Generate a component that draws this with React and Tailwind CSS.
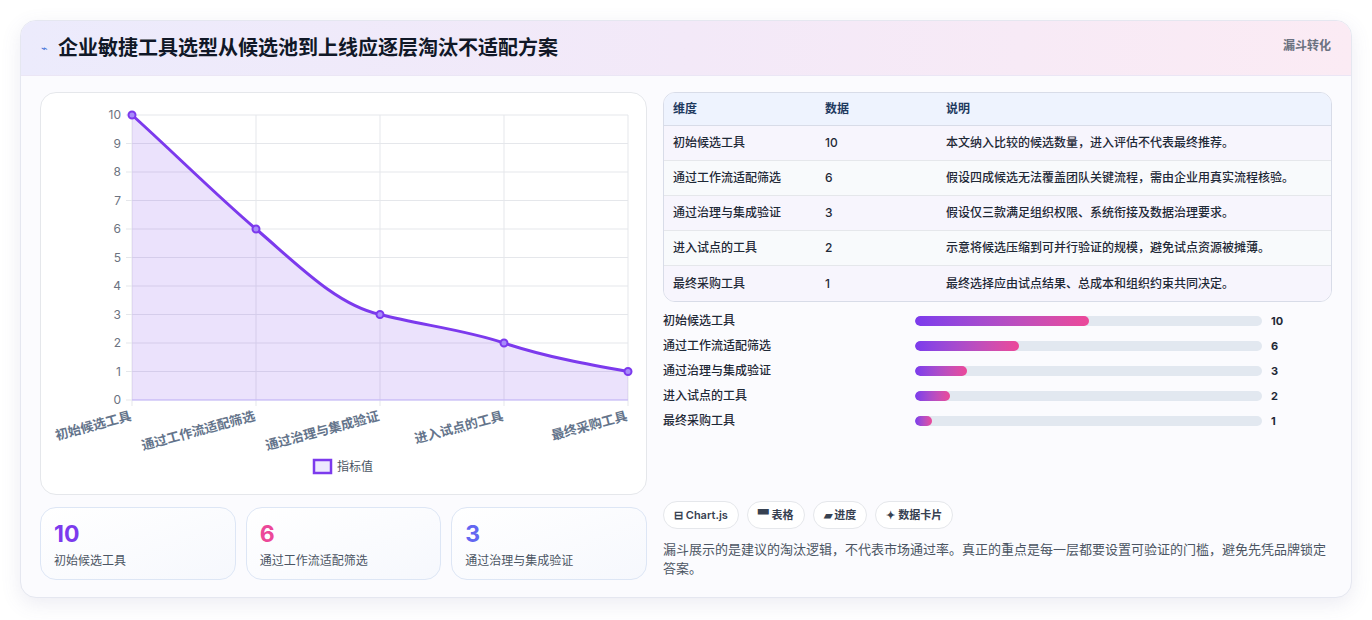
const rows = [
  ["初始候选工具", 10, "本文纳入比较的候选数量，进入评估不代表最终推荐。"],
  ["通过工作流适配筛选", 6, "假设四成候选无法覆盖团队关键流程，需由企业用真实流程核验。"],
  ["通过治理与集成验证", 3, "假设仅三款满足组织权限、系统衔接及数据治理要求。"],
  ["进入试点的工具", 2, "示意将候选压缩到可并行验证的规模，避免试点资源被摊薄。"],
  ["最终采购工具", 1, "最终选择应由试点结果、总成本和组织约束共同决定。"],
];

const xs = [131, 255, 379, 503, 627];
const yOf = (v) => 400 - v * 28.5;

function Chart() {
  return (
    <svg width="606" height="400" viewBox="40 93 606 400" className="block">
      {[0, 1, 2, 3, 4, 5, 6, 7, 8, 9, 10].map((v) => (
        <g key={v}>
          <line x1="125" x2="627" y1={yOf(v)} y2={yOf(v)} stroke="#e5e7eb" />
          <text x="120" y={yOf(v) + 4} textAnchor="end" fontSize="12" fill="#6b7280">{v}</text>
        </g>
      ))}
      {xs.map((x) => (
        <line key={x} x1={x} x2={x} y1="115" y2="406" stroke="#e5e7eb" />
      ))}
      <path d="M131,115 C170,150 215,195 255,229 C295,263 335,305 379,314.5 C420,325 465,330 503,343 C545,357 590,365 627,371.5 L627,400 L131,400 Z" fill="#7c3aed" fillOpacity="0.15" />
      <line x1="131" x2="627" y1="400" y2="400" stroke="#c4b5fd" />
      <path d="M131,115 C170,150 215,195 255,229 C295,263 335,305 379,314.5 C420,325 465,330 503,343 C545,357 590,365 627,371.5" fill="none" stroke="#7c3aed" strokeWidth="3" />
      {rows.map((r, i) => (
        <circle key={i} cx={xs[i]} cy={yOf(r[1])} r="3.5" fill="#a78bfa" stroke="#7c3aed" strokeWidth="2" />
      ))}
      {rows.map((r, i) => (
        <text key={i} x={xs[i]} y="420" textAnchor="end" fontSize="13" fontWeight="600" fill="#64748b" transform={`rotate(-15 ${xs[i]} 420)`}>{r[0]}</text>
      ))}
      <rect x="313" y="460" width="17" height="13" fill="#ede9fe" stroke="#7c3aed" strokeWidth="2.5" />
      <text x="336" y="471" fontSize="12" fill="#4b5563">指标值</text>
    </svg>
  );
}

export default function App() {
  return (
    <div className="w-[1372px] h-[620px] bg-white pt-5 px-5" style={{ fontFamily: "Inter, 'Noto Sans CJK SC', sans-serif" }}>
      <div className="rounded-2xl border border-[#e5e7f0] bg-[#fbfbfe] shadow-[0_6px_20px_rgba(100,100,160,0.12)] overflow-hidden">
        <div className="h-[55px] flex items-center justify-between px-5 bg-gradient-to-r from-[#ecebfc] via-[#f3e9f8] to-[#fbebf4] border-b border-[#ebe6f5]">
          <div className="flex items-center gap-2.5">
            <span className="text-[11px] text-[#3b6fd8]">⌁</span>
            <h1 className="text-[20px] font-bold text-[#111827]">企业敏捷工具选型从候选池到上线应逐层淘汰不适配方案</h1>
          </div>
          <span className="text-[12px] font-semibold text-[#6b7280] self-start mt-4">漏斗转化</span>
        </div>
        <div className="flex gap-4 px-[19px] pt-[16px] pb-[17px]">
          <div className="w-[607px] flex flex-col gap-[12px]">
            <div className="rounded-2xl border border-[#e5e7eb] bg-white h-[403px] overflow-hidden">
              <Chart />
            </div>
            <div className="grid grid-cols-3 gap-[10px]">
              {[["10", "text-[#7c3aed]", rows[0][0]], ["6", "text-[#ec4899]", rows[1][0]], ["3", "text-[#6366f1]", rows[2][0]]].map(([v, c, l]) => (
                <div key={l} className="h-[73px] rounded-2xl border border-[#dde6f5] bg-gradient-to-br from-white to-[#f6f8fd] px-[13px] pt-[12px]">
                  <div className={`text-[23px] font-bold leading-7 ${c}`}>{v}</div>
                  <div className="text-[12px] text-[#4b5563] mt-1">{l}</div>
                </div>
              ))}
            </div>
          </div>
          <div className="flex-1 flex flex-col">
            <div className="rounded-xl border border-[#d8dce8] overflow-hidden">
              <div className="flex h-[33px] items-center bg-[#eef3fe] border-b border-[#d8dce8] text-[12px] font-semibold text-[#1e3a5f]">
                <div className="w-[161px] pl-[9px]">维度</div>
                <div className="w-[121px]">数据</div>
                <div>说明</div>
              </div>
              {rows.map((r, i) => (
                <div key={i} className={`flex h-[35px] items-center text-[12px] text-[#1f2937] font-medium ${i < 4 ? "border-b border-[#e5e7eb]" : ""} ${i % 2 ? "bg-[#f8fafc]" : "bg-[#f7f5fd]"}`}>
                  <div className="w-[161px] pl-[9px]">{r[0]}</div>
                  <div className="w-[121px]">{r[1]}</div>
                  <div>{r[2]}</div>
                </div>
              ))}
            </div>
            <div className="flex flex-col gap-[11px] mt-[12px]">
              {rows.map((r, i) => (
                <div key={i} className="flex items-center h-[14px] text-[12px] font-medium text-[#1f2937]">
                  <div className="w-[252px]">{r[0]}</div>
                  <div className="w-[347px] h-[10px] rounded-full bg-[#e2e8f0] overflow-hidden">
                    <div className="h-full rounded-full bg-gradient-to-r from-[#7c3aed] to-[#ec4899]" style={{ width: `${r[1] * 5}%` }} />
                  </div>
                  <div className="ml-[9px] font-bold text-[11px]">{r[1]}</div>
                </div>
              ))}
            </div>
            <div className="flex gap-2 mt-[73px]">
              {["⊟ Chart.js", "▀ 表格", "▰ 进度", "✦ 数据卡片"].map((t) => (
                <span key={t} className="h-[28px] px-[10px] flex items-center rounded-full border border-[#e5e7eb] bg-white text-[11px] font-semibold text-[#374151]">{t}</span>
              ))}
            </div>
            <p className="mt-[11px] text-[13px] leading-[19px] text-[#4b5563]">漏斗展示的是建议的淘汰逻辑，不代表市场通过率。真正的重点是每一层都要设置可验证的门槛，避免先凭品牌锁定答案。</p>
          </div>
        </div>
      </div>
    </div>
  );
}
